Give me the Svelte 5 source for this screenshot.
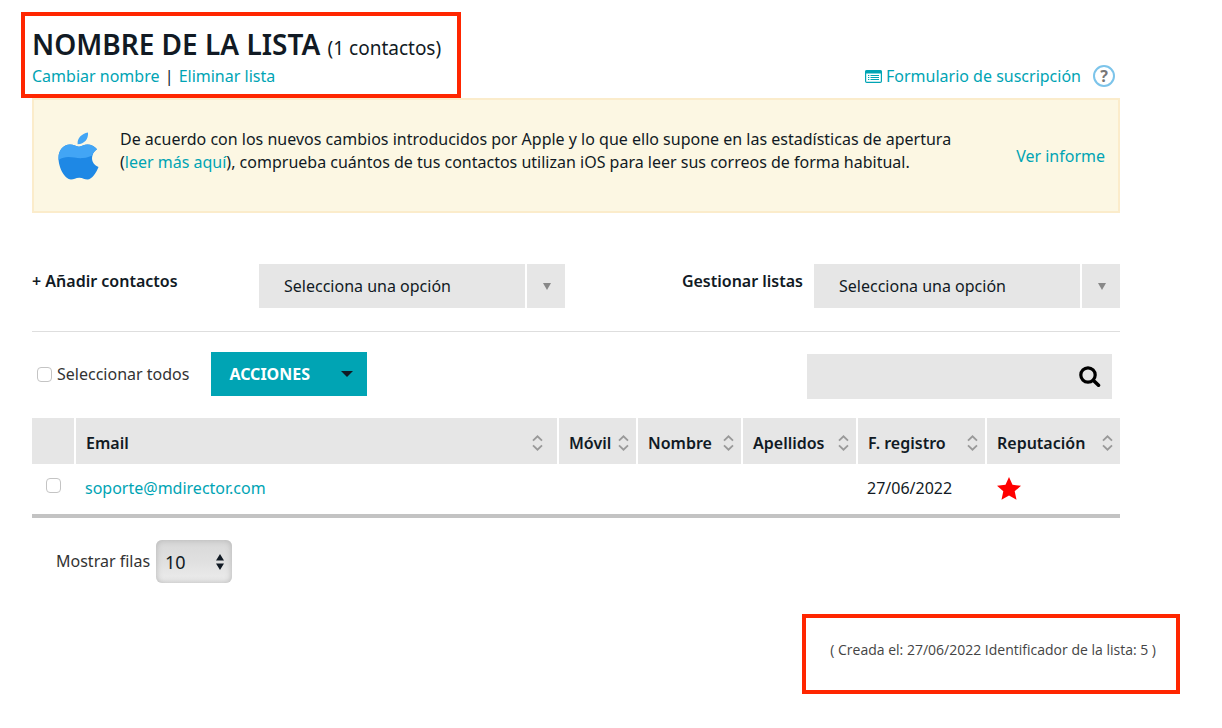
<script>
	let todos = false;
	let busqueda = '';
	let filas = '10';

	const columnas = [
		{ id: 'email', titulo: 'Email' },
		{ id: 'movil', titulo: 'Móvil' },
		{ id: 'nombre', titulo: 'Nombre' },
		{ id: 'apellidos', titulo: 'Apellidos' },
		{ id: 'registro', titulo: 'F. registro' },
		{ id: 'reputacion', titulo: 'Reputación' }
	];

	let contactos = [
		{ email: 'soporte@mdirector.com', movil: '', nombre: '', apellidos: '', registro: '27/06/2022', marcado: false }
	];

	function marcarTodos() {
		contactos = contactos.map((c) => ({ ...c, marcado: todos }));
	}
</script>

<main class="page">
	<header class="header">
		<div class="marco titulo">
			<h1>NOMBRE DE LA LISTA <small>({contactos.length} contactos)</small></h1>
			<nav><a href="#cambiar">Cambiar nombre</a> <span>|</span> <a href="#eliminar">Eliminar lista</a></nav>
		</div>
		<div class="suscripcion">
			<a href="#formulario">
				<svg width="17" height="13" viewBox="0 0 17 13" aria-hidden="true">
					<rect x="0.6" y="0.6" width="15.8" height="11.8" rx="1.2" fill="#fff" stroke="currentColor" stroke-width="1.2" />
					<path d="M0.5 0.5h16v3h-16z" fill="currentColor" />
					<path d="M3 5.5h1.3M3 7.5h1.3M3 9.5h1.3M5.5 5.5h8.5M5.5 7.5h8.5M5.5 9.5h8.5" stroke="currentColor" stroke-width="1.1" />
				</svg>
				Formulario de suscripción
			</a>
			<button class="ayuda" type="button" title="Ayuda">?</button>
		</div>
	</header>

	<div class="contenido">
		<section class="aviso">
			<svg class="apple" width="41" height="48" viewBox="0 0 41 48" aria-hidden="true">
				<path d="M30 0.5C30.6 7 26.5 12 19.6 12.2C19 6.500 23.500 1.500 30 0.5Z" fill="#42a5f5" />
				<path
					d="M39 17.300C36.500 14 33 12.500 29.500 12.500C26 12.500 23.500 14.700 21 14.700C18.500 14.700 15.500 12.500 12 12.500C5.500 12.500 0.500 18 0.500 26C0.500 36 7 47.500 13 47.500C16 47.500 17.500 45.700 21.300 45.700C25 45.700 26.300 47.500 29.500 47.500C34 47.500 38.500 40.500 40.500 35C36.500 33.500 34 30 34 26C34 22.500 36 19.200 39 17.300Z"
					fill="#1e88e5"
				/>
				<path
					d="M39 17.300C36.500 14 33 12.500 29.500 12.500C26 12.500 23.500 14.700 21 14.700C18.500 14.700 15.500 12.500 12 12.500C5.500 12.500 0.500 18 0.500 26L0.600 28C9 22 17 27 25 26C29 25.500 32 24.500 34.300 23.400C35 21 36.700 18.900 39 17.300Z"
					fill="#42a5f5"
				/>
			</svg>
			<p>
				De acuerdo con los nuevos cambios introducidos por Apple y lo que ello supone en las estadísticas de apertura
				(<a href="#leer">leer más aquí</a>), comprueba cuántos de tus contactos utilizan iOS para leer sus correos de
				forma habitual.
			</p>
			<a href="#informe">Ver informe</a>
		</section>

		<section class="gestion">
			<div class="grupo anadir">
				<label for="anadir">+ Añadir contactos</label>
				<div class="selector">
					<select id="anadir"><option>Selecciona una opción</option></select>
					<svg width="8" height="7" viewBox="0 0 8 7" aria-hidden="true"><path d="M0 0h8L4 7z" fill="#888" /></svg>
				</div>
			</div>
			<div class="grupo">
				<label for="gestionar">Gestionar listas</label>
				<div class="selector">
					<select id="gestionar"><option>Selecciona una opción</option></select>
					<svg width="8" height="7" viewBox="0 0 8 7" aria-hidden="true"><path d="M0 0h8L4 7z" fill="#888" /></svg>
				</div>
			</div>
		</section>

		<section class="acciones">
			<label class="todos">
				<input type="checkbox" bind:checked={todos} on:change={marcarTodos} />
				Seleccionar todos
			</label>
			<button class="boton" type="button">
				ACCIONES
				<svg width="12" height="6" viewBox="0 0 12 6" aria-hidden="true"><path d="M0 0h12L6 6z" fill="#111a24" /></svg>
			</button>
			<div class="buscador">
				<input type="text" bind:value={busqueda} aria-label="Buscar" />
				<button type="button" aria-label="Buscar">
					<svg width="22" height="22" viewBox="0 0 22 22" fill="none" stroke="#000" aria-hidden="true">
						<circle cx="9" cy="9" r="7.200" stroke-width="3.200" />
						<path d="M14.500 14.500l5 4.700" stroke-width="3.600" stroke-linecap="round" />
					</svg>
				</button>
			</div>
		</section>

		<table>
			<colgroup>
				<col class="c-check" />
				{#each columnas as col}
					<col class="c-{col.id}" />
				{/each}
			</colgroup>
			<thead>
				<tr>
					<th></th>
					{#each columnas as col}
						<th class={col.id}>
							<button class="orden" type="button">
								{col.titulo}
								<svg width="11" height="16" viewBox="0 0 11 16" fill="none" stroke="#999" stroke-width="1.800" aria-hidden="true">
									<path d="M1 5.700L5.500 1.300L10 5.700M1 10.300L5.500 14.700L10 10.300" />
								</svg>
							</button>
						</th>
					{/each}
				</tr>
			</thead>
			<tbody>
				{#each contactos as contacto}
					<tr>
						<td class="marca"><input type="checkbox" bind:checked={contacto.marcado} aria-label={contacto.email} /></td>
						<td><a href="#contacto">{contacto.email}</a></td>
						<td>{contacto.movil}</td>
						<td>{contacto.nombre}</td>
						<td>{contacto.apellidos}</td>
						<td>{contacto.registro}</td>
						<td>
							<svg class="estrella" width="24" height="23" viewBox="0 0 24 23" aria-hidden="true">
								<path d="M12 0L15.500 7.800L24 8.700L17.700 14.300L19.500 22.700L12 18.400L4.500 22.700L6.300 14.300L0 8.700L8.500 7.800Z" fill="#f00" />
							</svg>
						</td>
					</tr>
				{/each}
			</tbody>
		</table>

		<div class="filas">
			<label for="filas">Mostrar filas</label>
			<div class="selector-filas">
				<select id="filas" bind:value={filas}>
					<option>10</option>
					<option>25</option>
					<option>50</option>
				</select>
				<svg width="8" height="16" viewBox="0 0 8 16" aria-hidden="true">
					<path d="M0 6.500L4 0L8 6.500zM0 9.500h8L4 16z" fill="#111a24" />
				</svg>
			</div>
		</div>
	</div>

	<footer class="marco pie">( Creada el: 27/06/2022 Identificador de la lista: 5 )</footer>
</main>

<style>
	:global(body) {
		margin: 0;
		background: #fff;
	}

	.page {
		display: flex;
		flex-direction: column;
		padding: 12px 42px 34px 21px;
		font-family: 'Noto Sans', 'Open Sans', sans-serif;
		font-size: 16px;
		line-height: 22px;
		color: #111a24;
	}

	.page * {
		box-sizing: border-box;
	}

	a {
		color: #00a4b4;
		text-decoration: none;
	}

	button,
	select,
	input {
		font: inherit;
		color: inherit;
		margin: 0;
	}

	button {
		border: 0;
		padding: 0;
		background: none;
		cursor: pointer;
	}

	select {
		appearance: none;
		border: 0;
		border-radius: 0;
	}

	svg {
		display: block;
		flex: none;
	}

	.marco {
		border: 4px solid #ff2600;
	}

	.header {
		display: flex;
		justify-content: space-between;
		align-items: flex-end;
		padding-right: 65px;
	}

	.titulo {
		padding: 12px 16px 7px 7px;
	}

	.titulo span {
		margin: 0 1px;
	}

	h1 {
		margin: 0;
		font-size: 28px;
		line-height: 33px;
		font-weight: 600;
	}

	h1 small {
		font-size: 19px;
		font-weight: 400;
	}

	.suscripcion {
		display: flex;
		align-items: center;
		gap: 12px;
		padding-bottom: 11px;
	}

	.suscripcion a {
		display: flex;
		align-items: center;
		gap: 4px;
	}

	.ayuda {
		width: 22px;
		height: 22px;
		border: 2px solid #7cc4ea;
		border-radius: 50%;
		font-weight: 700;
		line-height: 18px;
		color: #777;
	}

	.contenido {
		margin: 0 60px 0 11px;
	}

	.aviso {
		display: flex;
		align-items: center;
		min-height: 115px;
		padding: 0 13px 0 24px;
		border: 2px solid #fbeccb;
		background: #fcf7e3;
	}

	.aviso p {
		flex: 1;
		margin: 0;
		padding: 0 36px 10px 21px;
		line-height: 23px;
	}

	.gestion {
		display: flex;
		justify-content: space-between;
		padding: 51px 0 23px;
		border-bottom: 1px solid #dedede;
	}

	.grupo {
		display: flex;
		gap: 11px;
	}

	.grupo label {
		padding-top: 6px;
		font-weight: 600;
	}

	.anadir label {
		width: 216px;
	}

	.selector,
	.selector-filas {
		display: grid;
		align-items: center;
	}

	.selector > *,
	.selector-filas > * {
		grid-area: 1 / 1;
	}

	.selector svg {
		justify-self: end;
		margin-right: 14px;
		pointer-events: none;
	}

	.selector select {
		width: 306px;
		height: 44px;
		padding: 0 50px 0 25px;
		background: linear-gradient(#fff, #fff) right 38px top / 2px 100% no-repeat #e6e6e6;
	}

	.acciones {
		display: flex;
		align-items: flex-start;
		padding: 20px 8px 19px 5px;
	}

	input[type='checkbox'] {
		appearance: none;
		width: 15px;
		height: 15px;
		border: 1px solid #c4c4c4;
		border-radius: 4px;
		background: #fff;
	}

	input[type='checkbox']:checked {
		background: #00a4b4;
	}

	.todos {
		display: flex;
		align-items: center;
		gap: 5px;
		height: 44px;
		color: #333;
	}

	.boton {
		display: flex;
		align-items: center;
		justify-content: space-between;
		width: 156px;
		height: 44px;
		margin-left: 22px;
		padding: 0 14px 0 18px;
		background: #00a4b4;
		color: #fff;
		font-weight: 700;
	}

	.buscador {
		display: flex;
		width: 305px;
		height: 45px;
		margin: 2px 0 0 auto;
		padding-right: 11px;
		background: #e6e6e6;
	}

	.buscador input {
		flex: 1;
		min-width: 0;
		padding: 0 12px;
		border: 0;
		background: none;
	}

	table {
		width: 100%;
		table-layout: fixed;
		border-collapse: separate;
		border-spacing: 0;
		border-bottom: 4px solid #c3c3c3;
	}

	.c-check {
		width: 44px;
	}

	.c-movil {
		width: 79px;
	}

	.c-nombre {
		width: 105px;
	}

	.c-apellidos {
		width: 115px;
	}

	.c-registro {
		width: 129px;
	}

	.c-reputacion {
		width: 133px;
	}

	th {
		height: 46px;
		padding: 4px 7px 0 10px;
		background: #e6e6e6;
		background-clip: padding-box;
		border-right: 2px solid #fff;
	}

	th.email {
		padding-right: 14px;
	}

	th:last-child {
		border-right: 0;
	}

	.orden {
		display: flex;
		align-items: center;
		justify-content: space-between;
		width: 100%;
		font-weight: 600;
	}

	td {
		height: 50px;
		padding: 0 9px 2px;
	}

	td.marca {
		padding: 0 0 8px 14px;
		line-height: 0;
	}

	.estrella {
		margin-left: 1px;
	}

	.filas {
		display: flex;
		align-items: center;
		gap: 6px;
		padding: 22px 24px 31px;
		color: #333;
	}

	.filas label {
		padding-bottom: 2px;
	}

	.selector-filas select {
		width: 76px;
		height: 43px;
		padding: 0 24px 0 9px;
		border-radius: 6px;
		background: linear-gradient(#d8d8d8, #e0e0e0 50%, #ededed);
		box-shadow: inset 0 0 6px #b4b4b4;
		font-size: 18px;
		color: #111a24;
	}

	.selector-filas svg {
		justify-self: end;
		margin-right: 8px;
		pointer-events: none;
	}

	.pie {
		align-self: flex-end;
		padding: 21px 20px 29px 24px;
		font-family: 'Open Sans', sans-serif;
		font-size: 14px;
		color: #444;
	}
</style>
